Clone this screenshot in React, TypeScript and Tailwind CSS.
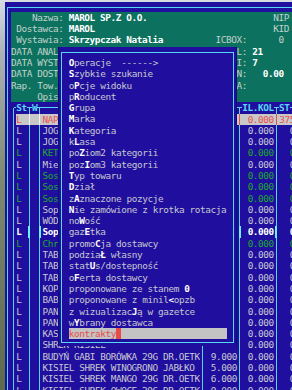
import type { ReactNode } from "react";

type Tone = "norm" | "green" | "sel" | "cur";

type Row = { name: string; qty?: string; il: string; st: string; tone: Tone };

const rows: Row[] = [
  { name: "NAPÓJ KUBUŚ MARCHEW 300ML", il: "0.000", st: "375", tone: "sel" },
  { name: "JOGURT NATURALNY 370G", il: "0.000", st: "0", tone: "norm" },
  { name: "JOGURT GRECKI 400G", il: "0.000", st: "0", tone: "norm" },
  { name: "KETCHUP ŁAGODNY 480G", il: "0.000", st: "0", tone: "green" },
  { name: "Mieszanka przyprawowa", il: "0.000", st: "0", tone: "norm" },
  { name: "Sos pieczeniowy jasny", il: "0.000", st: "0", tone: "green" },
  { name: "Sos pieczeniowy ciemny", il: "0.000", st: "0", tone: "green" },
  { name: "Sos do spaghetti", il: "0.000", st: "0", tone: "green" },
  { name: "Sopelki serowe", il: "0.000", st: "0", tone: "norm" },
  { name: "WÓDKA ŻOŁĄDKOWA", il: "0.000", st: "0", tone: "norm" },
  { name: "Sopelki solone", il: "0.000", st: "0", tone: "cur" },
  { name: "Chrupki kukurydziane", il: "0.000", st: "0", tone: "green" },
  { name: "TABLICZKA MLECZNA", il: "0.000", st: "0", tone: "norm" },
  { name: "TABLICZKA GORZKA", il: "0.000", st: "0", tone: "norm" },
  { name: "TABLICZKA ORZECH", il: "0.000", st: "0", tone: "norm" },
  { name: "KOPERTA SOS", il: "0.000", st: "0", tone: "norm" },
  { name: "BABKA PIASKOWA", il: "0.000", st: "0", tone: "norm" },
  { name: "PANIERKA", il: "0.000", st: "0", tone: "norm" },
  { name: "PANIERKA ZŁOTA", il: "0.000", st: "0", tone: "norm" },
  { name: "KASZKA MANNA", il: "0.000", st: "0", tone: "norm" },
  { name: "SHREK KISIEL", il: "0.000", st: "0", tone: "norm" },
  { name: "BUDYŃ GABI BORÓWKA 29G DR.OETK", qty: "9.000", il: "0.000", st: "0", tone: "norm" },
  { name: "KISIEL SHREK WINOGRONO JABŁKO", qty: "5.000", il: "0.000", st: "0", tone: "norm" },
  { name: "KISIEL SHREK MANGO 29G DR.OETK", qty: "6.000", il: "0.000", st: "0", tone: "norm" },
  { name: "KISIEL SHREK OWOCE 29G DR.OETK", qty: "9.000", il: "0.000", st: "0", tone: "norm" },
];

const menu: [string, string, string][] = [
  ["", "O", "peracje  ------>"],
  ["", "S", "zybkie szukanie"],
  ["o", "P", "cje widoku"],
  ["p", "R", "oducent"],
  ["", "G", "rupa"],
  ["", "M", "arka"],
  ["", "K", "ategoria"],
  ["k", "L", "asa"],
  ["po", "Z", "iom2 kategorii"],
  ["poz", "I", "om3 kategorii"],
  ["", "T", "yp towaru"],
  ["", "D", "ział"],
  ["z", "A", "znaczone pozycje"],
  ["", "N", "ie zamówione z krotka rotacja"],
  ["no", "W", "ość"],
  ["gaz", "E", "tka"],
  ["promo", "C", "ja dostawcy"],
  ["podzia", "Ł", " własny"],
  ["stat", "U", "s/dostepność"],
  ["o", "F", "erta dostawcy"],
  ["proponowane ze stanem ", "0", ""],
  ["proponowane z minil", "<", "opzb"],
  ["z wizualizac", "J", "ą w gazetce"],
  ["w", "Y", "brany dostawca"],
];

const toneText: Record<Tone, string> = {
  norm: "text-[#c8c8d2]",
  green: "text-[#1ca82e]",
  sel: "text-[#ec4f4f]",
  cur: "font-bold text-white",
};

const toneSep: Record<Tone, string> = {
  norm: "w-px bg-[#55d5f2]",
  green: "w-px bg-[#55d5f2]",
  sel: "w-px bg-[#e05252]",
  cur: "w-[2px] bg-[#66f2ff]",
};

const sp = (n: number) => " ".repeat(n);

function B({ children }: { children: ReactNode }) {
  return <span className="font-bold text-white">{children}</span>;
}

function VLine({ cls = "w-px bg-[#55d5f2]" }: { cls?: string }) {
  return (
    <div className="flex w-[5.26px] shrink-0 justify-center">
      <div className={cls} />
    </div>
  );
}

function Tee({ corner = false }: { corner?: boolean }) {
  return (
    <div className="flex w-[5.26px] shrink-0 flex-col">
      <div className="flex h-1/2">
        <div className={corner ? "w-1/2" : "w-1/2 border-b border-[#55d5f2]"} />
        <div className="flex-1 border-b border-[#55d5f2]" />
      </div>
      <div className="flex flex-1 justify-center">
        <div className="w-px bg-[#55d5f2]" />
      </div>
    </div>
  );
}

function HLine({ w }: { w: string }) {
  return (
    <div className={`flex shrink-0 flex-col ${w}`}>
      <div className="h-1/2 border-b border-[#55d5f2]" />
    </div>
  );
}

function HeaderRow() {
  return (
    <div className="flex h-[11.3px] font-bold text-[#58d8f4]">
      <Tee corner />
      <div className="w-[10.52px] shrink-0">St</div>
      <Tee />
      <div className="w-[5.26px] shrink-0">W</div>
      <Tee />
      <HLine w="w-[157.8px]" />
      <Tee />
      <HLine w="w-[31.56px]" />
      <Tee />
      <div className="w-[31.56px] shrink-0">IL.KOL</div>
      <Tee />
      <div className="w-[10.52px] shrink-0">ST</div>
      <HLine w="w-[40px]" />
    </div>
  );
}

function TableRow({ r }: { r: Row }) {
  const sep = toneSep[r.tone];
  return (
    <div className="flex h-[11.3px]">
      <VLine />
      <div className={`flex flex-1 ${toneText[r.tone]} ${r.tone === "sel" ? "bg-[#c8c8c8]" : ""}`}>
        <div className="w-[10.52px] shrink-0">L</div>
        <VLine cls={r.tone === "sel" ? "w-px bg-[#f0f0f0]" : sep} />
        <div className="w-[5.26px] shrink-0" />
        <VLine cls={r.tone === "sel" ? "w-px bg-[#f0f0f0]" : sep} />
        <div className="w-[157.8px] shrink-0 overflow-hidden whitespace-pre">{r.name}</div>
        <VLine cls={sep} />
        <div className="w-[31.56px] shrink-0 text-right">{r.qty ?? ""}</div>
        <VLine cls={sep} />
        <div className="w-[31.56px] shrink-0 text-right">{r.il}</div>
        <VLine cls={sep} />
        <div className="w-[15.78px] shrink-0 text-right">{r.st}</div>
      </div>
    </div>
  );
}

function InfoPanel() {
  return (
    <div className="whitespace-pre bg-[#0c725f] text-[#c2d2cc]">
      <div className="h-[11.3px]">
        {"    Nazwa: "}
        <B>MAROL SP.Z O.O.</B>
        {sp(24) + "NIP"}
      </div>
      <div className="h-[11.3px]">
        {" Dostawca: "}
        <B>MAROL</B>
        {sp(34) + "KID"}
      </div>
      <div className="h-[11.3px]">
        {" Wystawia: "}
        <B>Skrzypczak Natalia</B>
        {sp(10) + "ICBOX:" + sp(6) + "0"}
      </div>
      <div className="h-[11.3px]">
        {"DATA ANALIZY:" + sp(30) + "L: "}
        <B>21</B>
      </div>
      <div className="h-[11.3px]">
        {"DATA WYSTAWIENIA:" + sp(26) + "I: "}
        <B>7</B>
      </div>
      <div className="h-[11.3px]">
        {"DATA DOSTAWY:" + sp(30) + "N:   "}
        <B>0.00</B>
      </div>
      <div className="h-[11.3px]">{"Rap. Tow.:" + sp(33) + "A:"}</div>
      <div className="h-[11.3px]">{"     Opis:"}</div>
    </div>
  );
}

function PopupMenu() {
  return (
    <div className="absolute left-[57.5px] top-[47px] h-[299px] w-[179.5px] border-x border-[#140a78] bg-[#200f9e] pb-[3px] pl-[2px] pr-[2px] pt-[5px]">
      <div className="h-full border border-[#56d8f4] pl-[7.3px] pt-[4px]">
        {menu.map(([a, k, b]) => (
          <div key={a + k + b} className="h-[11.3px] whitespace-pre text-[#c6c6d0]">
            {a}
            <B>{k}</B>
            {b}
          </div>
        ))}
        <div className="h-[11.3px] w-[157.8px] whitespace-pre bg-[#c4c4c4] text-[#e84c48]">
          kontrakty<span className="bg-[#e84c48]"> </span>
        </div>
      </div>
    </div>
  );
}

export default function App() {
  return (
    <div className="relative h-[390px] w-[292px] overflow-hidden bg-[linear-gradient(180deg,#d5dbe2_0%,#aab2b6_14%,#7d8a70_45%,#5c6a4e_100%)] pl-[5px] pt-[2px] font-['DejaVu_Sans_Mono',monospace] text-[9.4px] leading-[11.3px] tracking-[-0.4px]">
      <div className="h-full bg-[#200f9e] pl-[2px] pt-[5px]">
        <div className="h-full border-l border-t border-[#56d8f4] pl-[2.96px] pt-[3.85px]">
          <InfoPanel />
          <HeaderRow />
          {rows.map((r, i) => (
            <TableRow key={i} r={r} />
          ))}
        </div>
      </div>
      <PopupMenu />
    </div>
  );
}
